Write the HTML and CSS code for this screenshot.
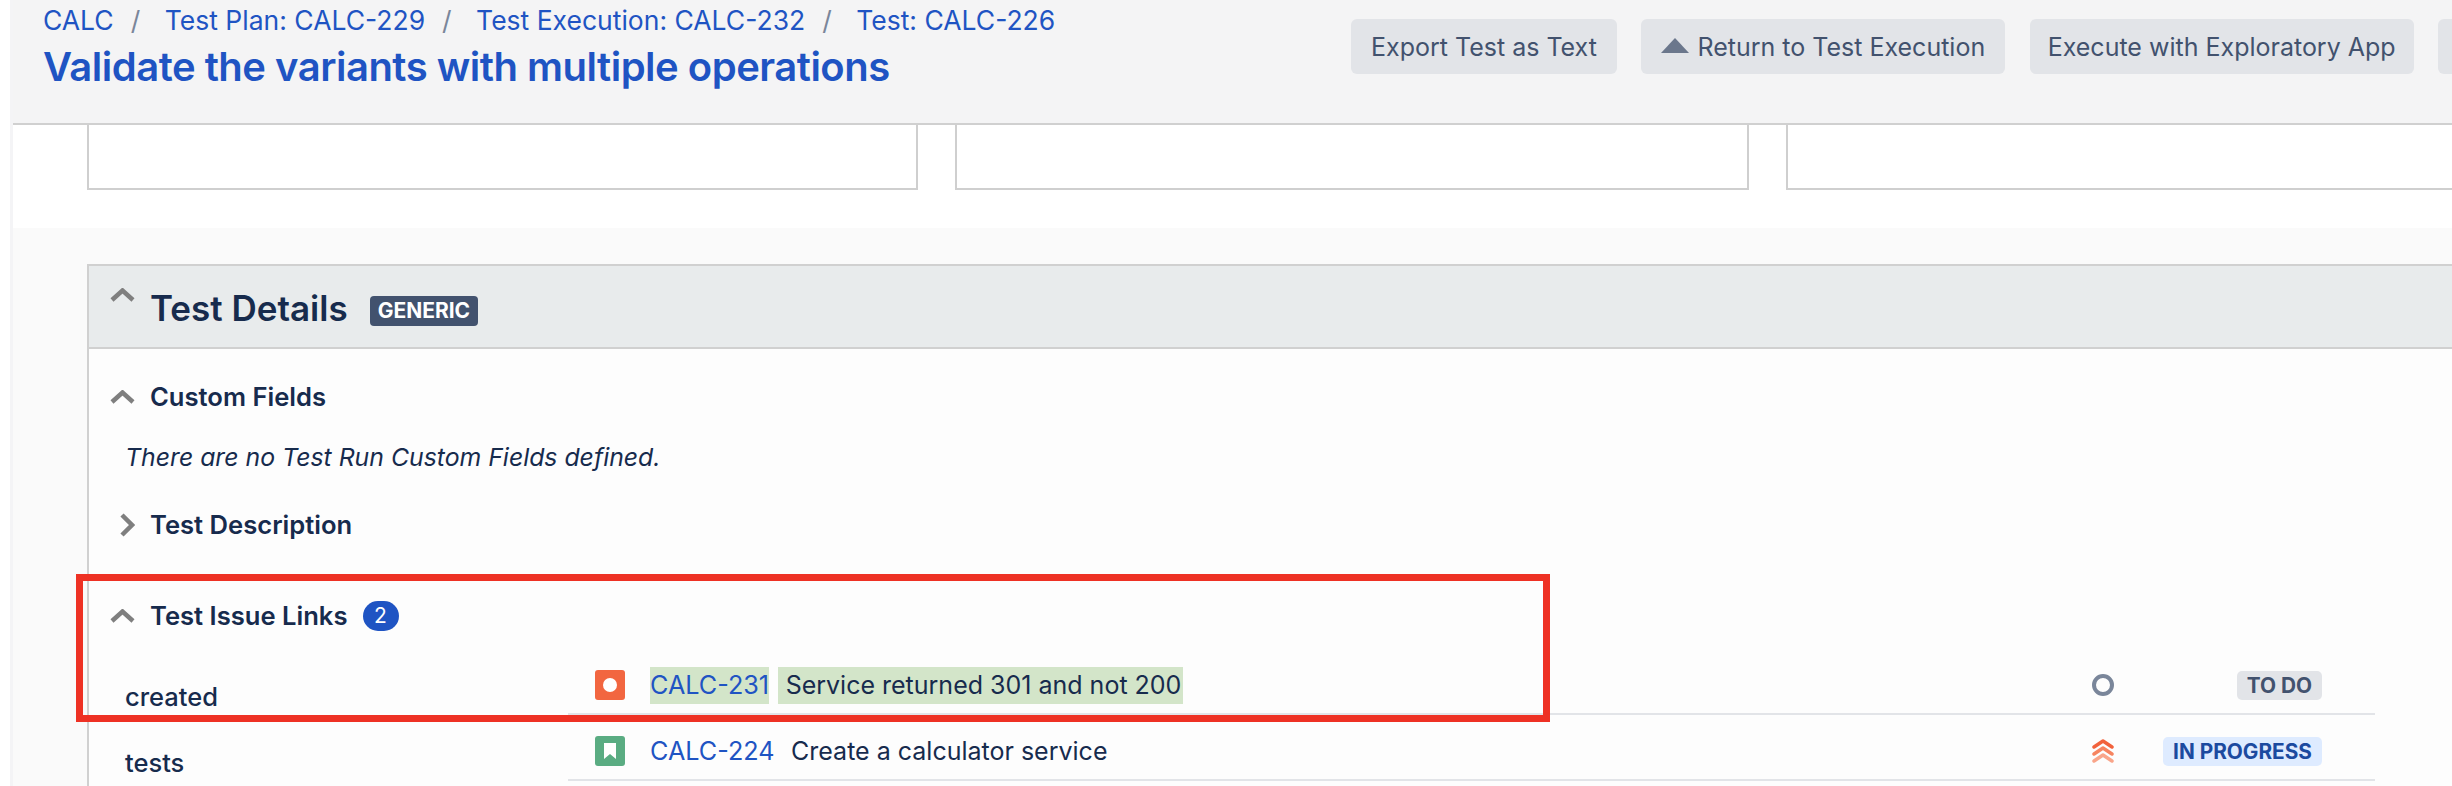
FILE: index.html
```html
<!DOCTYPE html>
<html lang="en">
<head>
    <meta charset="UTF-8">
    <title>Validate the variants with multiple operations</title>
    <link rel="stylesheet" href="styles.css">
</head>

<body>

    <div class="page">
        <!-- Top bar -->
        <header class="top-bar">
            <div class="title-block">
                <nav class="crumbs">
                    <a href="#">CALC</a><span class="sep">/</span>
                    <a href="#">Test Plan: CALC-229</a><span class="sep">/</span>
                    <a href="#">Test Execution: CALC-232</a><span class="sep">/</span>
                    <a href="#">Test: CALC-226</a>
                </nav>
                <h1>Validate the variants with multiple operations</h1>
            </div>
            <div class="actions">
                <button>Export Test as Text</button>
                <button><span class="up-arrow"></span>Return to Test Execution</button>
                <button class="btn-tight">Execute with Exploratory App</button>
                <button class="cut-off"></button>
            </div>
        </header>

        <!-- Summary boxes, scrolled mostly out of view -->
        <div class="white-band">
            <div class="box box-one"></div>
            <div class="box box-two"></div>
            <div class="box box-three"></div>
        </div>

        <div class="content">
            <section class="panel">
                <div class="panel-head">
                    <svg class="chev chev-head" viewBox="0 0 25 14"><path d="M2 12 12.500 2.500 23 12"/></svg>
                    <h2>Test Details</h2>
                    <span class="type-badge">GENERIC</span>
                </div>

                <div class="panel-body">
                    <div class="sub-head sub-custom">
                        <svg class="chev" viewBox="0 0 25 14"><path d="M2 12 12.500 2.500 23 12"/></svg>
                        <h3>Custom Fields</h3>
                    </div>
                    <p class="no-fields">There are no Test Run Custom Fields defined.</p>

                    <div class="sub-head sub-desc">
                        <svg class="chev-right" viewBox="0 0 16 24"><path d="M3 2 13 12 3 22"/></svg>
                        <h3>Test Description</h3>
                    </div>

                    <div class="sub-head sub-links">
                        <svg class="chev" viewBox="0 0 25 14"><path d="M2 12 12.500 2.500 23 12"/></svg>
                        <h3>Test Issue Links</h3>
                        <span class="count">2</span>
                    </div>

                    <div class="link-group first-group">
                        <div class="link-type">created</div>
                        <div class="link-row">
                            <svg class="issue-icon" viewBox="0 0 30 30"><rect width="30" height="30" rx="3" fill="#f26640"/><circle cx="15" cy="15" r="7" fill="#fff"/></svg>
                            <a class="issue-key hl" href="#">CALC-231</a>
                            <span class="issue-name hl">Service returned 301 and not 200</span>
                            <span class="row-end">
                                <span class="prio"><svg viewBox="0 0 22 22"><circle cx="11" cy="11" r="9" fill="none" stroke="#7a869a" stroke-width="4"/></svg></span>
                                <span class="status-col"><span class="lozenge todo">TO DO</span></span>
                            </span>
                        </div>
                    </div>

                    <div class="link-group">
                        <div class="link-type">tests</div>
                        <div class="link-row">
                            <svg class="issue-icon" viewBox="0 0 30 30"><rect width="30" height="30" rx="3" fill="#5aac82"/><path d="M9 7h12v16l-6-5-6 5z" fill="#fff"/></svg>
                            <a class="issue-key" href="#">CALC-224</a>
                            <span class="issue-name">Create a calculator service</span>
                            <span class="row-end">
                                <span class="prio"><svg viewBox="0 0 22 26"><g fill="none" stroke-width="3.500" stroke-linecap="round" stroke-linejoin="round"><path d="M2 9 11 3l9 6" stroke="#f2623c"/><path d="M2 16 11 10l9 6" stroke="#f68460"/><path d="M2 23 11 17l9 6" stroke="#f9a58a"/></g></svg></span>
                                <span class="status-col"><span class="lozenge progress">IN PROGRESS</span></span>
                            </span>
                        </div>
                    </div>
                </div>
            </section>
        </div>

        <!-- Annotation drawn on top of the screenshot -->
        <div class="red-mark"></div>
    </div>

</body>

</html>
```

FILE: styles.css
```css
/* General Styles */
html,
body {
    height: 100%;
}

body {
    margin: 0;
    font-family: 'Inter', 'Liberation Sans', sans-serif;
    color: #172b4d;
    background: #fff;
    overflow: hidden;
}

a {
    color: #1f54c3;
    text-decoration: none;
}

.page {
    position: relative;
    height: 786px;
    margin-left: 10px;
    border-left: 3px solid #f4f4f6;
    overflow: hidden;
}

/* Top bar */
.top-bar {
    display: flex;
    height: 123px;
    background-color: #f4f4f5;
    border-bottom: 2px solid #d0d0d0;
    padding-left: 30px;
}

.title-block {
    width: 1308px;
    flex-shrink: 0;
}

.crumbs {
    font-size: 26.500px;
    line-height: 30px;
    margin-top: 5px;
    white-space: nowrap;
}

.sep {
    color: #7a869a;
    margin: 0 17px;
}

h1 {
    margin: 8px 0 0;
    font-size: 40px;
    line-height: 48px;
    font-weight: 600;
    letter-spacing: -0.5px;
    color: #1f54c3;
    white-space: nowrap;
}

.actions {
    display: flex;
    gap: 24.500px;
    margin-top: 19px;
}

button {
    height: 55px;
    padding: 0 20px;
    border: none;
    border-radius: 6px;
    background-color: #e2e4e8;
    color: #42526e;
    font-family: inherit;
    font-size: 25px;
    white-space: nowrap;
    flex-shrink: 0;
}

.btn-tight {
    padding: 0 18px;
}

.cut-off {
    width: 260px;
}

.up-arrow {
    display: inline-block;
    width: 0;
    height: 0;
    margin-right: 8px;
    border-left: 14px solid transparent;
    border-right: 14px solid transparent;
    border-bottom: 15px solid #6b778c;
    vertical-align: 3px;
}

/* Summary boxes */
.white-band {
    display: flex;
    height: 103px;
    padding-left: 74px;
    background-color: #fff;
}

.box {
    box-sizing: border-box;
    height: 65px;
    border: 2px solid #cfcfcf;
    border-top: none;
    background-color: #fff;
    flex-shrink: 0;
}

.box-one {
    width: 831px;
}

.box-two {
    width: 794px;
    margin-left: 37px;
}

.box-three {
    width: 800px;
    margin-left: 37px;
}

/* Test details */
.content {
    background-color: #fafafa;
    padding: 36px 0 0 74px;
    height: 522px;
}

.panel {
    border: 2px solid #d0d0d0;
    border-right: none;
    background-color: #fdfdfd;
    height: 600px;
}

.panel-head {
    display: flex;
    align-items: center;
    height: 81px;
    padding-left: 21px;
    background-color: #e8ebec;
    border-bottom: 2px solid #d0d0d0;
}

h2 {
    margin: 2px 22px 0 15px;
    font-size: 35px;
    line-height: 44px;
    font-weight: 600;
    color: #172b4d;
}

h3 {
    margin: 0;
    font-size: 25.600px;
    line-height: 30px;
    font-weight: 600;
    color: #172b4d;
}

.chev {
    width: 25px;
    height: 14px;
    flex-shrink: 0;
    fill: none;
    stroke: #7f7f7f;
    stroke-width: 4.500;
}

.chev-head {
    margin-bottom: 24px;
}

.chev-right {
    width: 16px;
    height: 24px;
    margin-left: 9px;
    flex-shrink: 0;
    fill: none;
    stroke: #7f7f7f;
    stroke-width: 4.500;
}

.type-badge {
    padding: 0 8px;
    height: 30px;
    line-height: 30px;
    margin-top: 8px;
    border-radius: 4px;
    background-color: #42526e;
    color: #fff;
    font-size: 21px;
    font-weight: 700;
}

.panel-body {
    padding-left: 21px;
}

.sub-head {
    display: flex;
    align-items: center;
    gap: 15px;
}

.sub-custom {
    margin-top: 33px;
}

.sub-desc {
    margin-top: 38px;
}

.sub-links {
    margin-top: 61px;
}

.count {
    display: inline-block;
    width: 36px;
    height: 30px;
    line-height: 30px;
    border-radius: 15px;
    background-color: #1f54c3;
    color: #fff;
    font-size: 21px;
    text-align: center;
}

.no-fields {
    margin: 30px 0 0 15px;
    font-size: 24.800px;
    line-height: 30px;
    font-style: italic;
}

/* Issue links */
.link-group {
    display: flex;
    align-items: flex-end;
    padding-right: 77px;
}

.first-group {
    margin-top: 18px;
}

.link-type {
    width: 443px;
    padding-left: 15px;
    font-size: 25.500px;
    font-weight: 500;
    line-height: 30px;
    margin-bottom: 3px;
    flex-shrink: 0;
}

.link-row {
    box-sizing: border-box;
    display: flex;
    align-items: center;
    flex: 1;
    height: 66px;
    padding: 8px 0 0 27px;
    border-bottom: 2px solid #e2e4e8;
    font-size: 25px;
    white-space: nowrap;
}

.issue-icon {
    width: 30px;
    height: 30px;
    margin-right: 25px;
    flex-shrink: 0;
}

.issue-key {
    margin-right: 8.500px;
    font-size: 25.200px;
}

.issue-name {
    padding: 0 2px 0 8px;
}

.hl {
    background-color: #d3e5c9;
    line-height: 37px;
}

.row-end {
    display: flex;
    align-items: center;
    margin-left: auto;
}

.prio {
    display: flex;
    width: 22px;
}

.prio svg {
    width: 22px;
}

.status-col {
    display: flex;
    justify-content: flex-end;
    width: 208px;
    margin-right: 53px;
}

.lozenge {
    height: 29px;
    line-height: 29px;
    padding: 0 10px;
    border-radius: 5px;
    font-size: 20.800px;
    font-weight: 700;
}

.todo {
    background-color: #e2e4e8;
    color: #42526e;
}

.progress {
    background-color: #deebff;
    color: #1c4a9f;
}

/* Annotation */
.red-mark {
    position: absolute;
    left: 63px;
    top: 574px;
    width: 1474px;
    height: 148px;
    box-sizing: border-box;
    border: 7px solid #ee3124;
}
```
